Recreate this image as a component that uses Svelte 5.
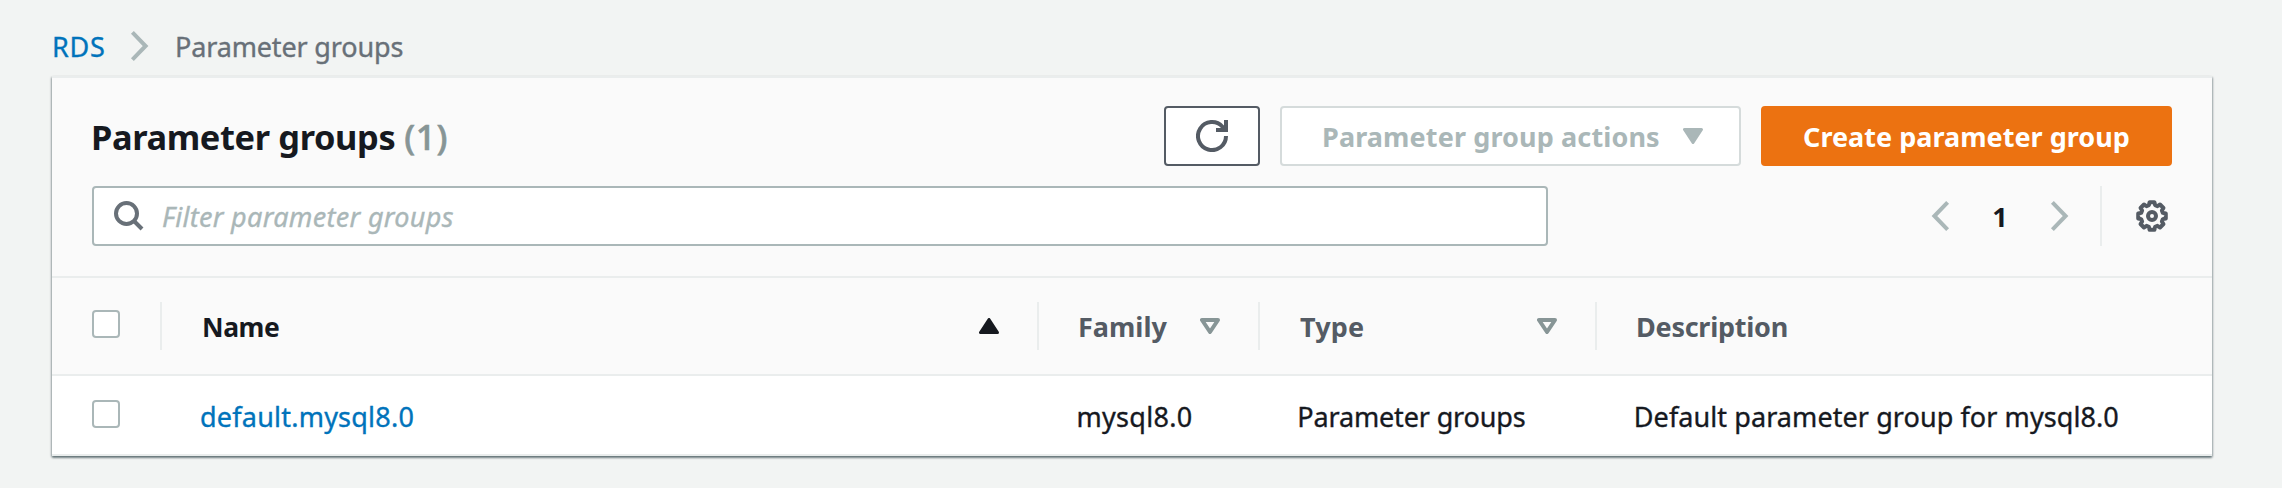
<script>
  const groups = [
    {
      name: 'default.mysql8.0',
      family: 'mysql8.0',
      type: 'Parameter groups',
      description: 'Default parameter group for mysql8.0'
    }
  ];

  // Eight-toothed outline of the settings gear, centred on 16,16.
  const gear = Array.from({ length: 8 }, (_, i) => {
    const point = (r, deg) => {
      const a = ((i * 45 + deg) * Math.PI) / 180;
      return `${(16 + r * Math.sin(a)).toFixed(2)},${(16 - r * Math.cos(a)).toFixed(2)}`;
    };
    return [point(14, -10), point(14, 10), point(11.3, 16), point(11.3, 29)].join(' ');
  }).join(' ');
</script>

{#snippet chevron(dir)}
  <svg class="chevron" class:left={dir === 'left'} viewBox="0 0 20 32" width="20" height="32" aria-hidden="true">
    <path d="M2.4 2.4 15.6 16 2.4 29.6" fill="none" stroke="#aab7b8" stroke-width="4" />
  </svg>
{/snippet}

{#snippet sort()}
  <svg viewBox="0 0 20 16" width="20" height="16" aria-hidden="true">
    <path d="M2 2H18L10 14Z" fill="none" stroke="#879596" stroke-width="4" stroke-linejoin="round" />
  </svg>
{/snippet}

<main>
  <nav>
    <a href="#rds">RDS</a>
    {@render chevron('right')}
    <span class="current">Parameter groups</span>
  </nav>

  <section class="card">
    <header>
      <div class="line">
        <h1>Parameter groups <span>(1)</span></h1>
        <div class="actions">
          <button class="refresh" aria-label="Refresh">
            <svg viewBox="0 0 32 32" width="32" height="32">
              <path d="M30 16A14 14 0 1 1 26.5 6.8L29 10" fill="none" stroke="#545b64" stroke-width="4" />
              <path d="M30 0V10H20" fill="none" stroke="#545b64" stroke-width="4" />
            </svg>
          </button>
          <button class="menu" disabled>
            <span>Parameter group actions</span>
            <svg viewBox="0 0 20 16" width="20" height="16">
              <path d="M1.5 1.5H18.5L10 14.5Z" fill="#aab7b8" stroke="#aab7b8" stroke-width="3" stroke-linejoin="round" />
            </svg>
          </button>
          <button class="create">Create parameter group</button>
        </div>
      </div>

      <div class="line tools">
        <div class="search">
          <svg viewBox="0 0 30 30" width="30" height="30">
            <circle cx="12.5" cy="12.5" r="10.5" fill="none" stroke="#687078" stroke-width="4" />
            <path d="M19.5 19.5 28 28" stroke="#687078" stroke-width="4" />
          </svg>
          <span>Filter parameter groups</span>
        </div>
        <div class="pager">
          {@render chevron('left')}
          <b>1</b>
          {@render chevron('right')}
          <div class="settings">
            <svg viewBox="0 0 32 32" width="32" height="32">
              <polygon points={gear} fill="none" stroke="#545b64" stroke-width="4" stroke-linejoin="round" />
              <circle cx="16" cy="16" r="4" fill="none" stroke="#545b64" stroke-width="4" />
            </svg>
          </div>
        </div>
      </div>
    </header>

    <div class="grid head">
      <div class="cell check"><i class="box"></i></div>
      <div class="cell name">
        <span>Name</span>
        <svg viewBox="0 0 20 16" width="20" height="16">
          <path d="M1.5 14.5H18.5L10 1.5Z" fill="#16191f" stroke="#16191f" stroke-width="3" stroke-linejoin="round" />
        </svg>
      </div>
      <div class="cell"><span>Family</span>{@render sort()}</div>
      <div class="cell type"><span>Type</span>{@render sort()}</div>
      <div class="cell desc"><span>Description</span></div>
    </div>

    {#each groups as g}
      <div class="grid row">
        <div class="cell check"><i class="box"></i></div>
        <div class="cell id"><a href="#group">{g.name}</a></div>
        <div class="cell fam">{g.family}</div>
        <div class="cell kind">{g.type}</div>
        <div class="cell text">{g.description}</div>
      </div>
    {/each}
  </section>
</main>

<style>
  :global(body) {
    background: #f2f4f3;
  }
  main {
    box-sizing: border-box;
    width: 2282px;
    height: 488px;
    padding: 16px 70px 0 52px;
    background: #f2f4f3;
    font: 27px/36px 'Noto Sans', 'Open Sans', sans-serif;
    color: #16191f;
    overflow: hidden;
  }
  svg {
    display: block;
    flex: none;
  }
  a {
    color: #0073bb;
    text-decoration: none;
  }
  nav,
  .row,
  .search {
    -webkit-text-stroke: 0.35px currentColor;
  }
  .chevron.left {
    transform: scaleX(-1);
  }

  nav {
    display: flex;
    align-items: center;
    height: 60px;
  }
  nav a,
  nav .current {
    padding-top: 2px;
  }
  nav a {
    width: 79px;
    letter-spacing: 0.7px;
  }
  nav .current {
    margin-left: 25px;
    color: #687078;
    letter-spacing: -0.15px;
  }
  nav .chevron {
    margin-left: -1px;
  }

  .card {
    box-sizing: border-box;
    width: 2160px;
    height: 380px;
    border-top: 2px solid #eaeded;
    border-bottom: 2px solid #eaeded;
    background: #fff;
    box-shadow:
      0 2px 2px 0 rgba(0, 28, 36, 0.4),
      1px 1px 2px 0 rgba(0, 28, 36, 0.22),
      -1px 1px 2px 0 rgba(0, 28, 36, 0.22);
  }
  header {
    box-sizing: border-box;
    height: 200px;
    padding: 28px 40px 0;
    background: #fafafa;
    border-bottom: 2px solid #eaeded;
  }
  .line {
    display: flex;
    justify-content: space-between;
    align-items: center;
    height: 60px;
  }
  .tools {
    margin-top: 20px;
  }
  h1 {
    display: flex;
    gap: 9px;
    margin: 2px 0 0 -1px;
    font-size: 34.4px;
    line-height: 44px;
    font-weight: 700;
    letter-spacing: -0.38px;
  }
  h1 span {
    font-weight: 500;
    font-size: 35px;
    color: #879596;
    letter-spacing: 0.6px;
    -webkit-text-stroke: 0.6px currentColor;
  }
  .actions {
    display: flex;
    gap: 20px;
  }
  button {
    box-sizing: border-box;
    display: flex;
    align-items: center;
    height: 60px;
    padding: 0;
    border: 2px solid #545b64;
    border-radius: 4px;
    background: #fff;
    font: inherit;
    font-weight: 700;
    justify-content: center;
  }
  .refresh {
    width: 96px;
  }
  .menu {
    width: 461px;
    justify-content: flex-start;
    padding-left: 40px;
    border-color: #d5dbdb;
    color: #aab7b8;
    letter-spacing: 0.12px;
  }
  .menu span {
    padding-top: 2px;
  }
  .menu svg {
    margin-left: 23px;
  }
  .create {
    width: 411px;
    padding-top: 2px;
    border-color: #ec7211;
    background: #ec7211;
    color: #fff;
    letter-spacing: 0.02px;
  }

  .search {
    box-sizing: border-box;
    display: flex;
    align-items: center;
    width: 1456px;
    height: 60px;
    padding-left: 20px;
    border: 2px solid #aab7b8;
    border-radius: 4px;
    background: #fff;
    color: #aab7b8;
    font-style: italic;
    letter-spacing: 0.3px;
  }
  .search span {
    margin-left: 18px;
    padding-top: 2px;
  }
  .pager {
    display: flex;
    align-items: center;
  }
  .pager b {
    width: 100px;
    padding-top: 2px;
    text-align: center;
  }
  .settings {
    display: flex;
    align-items: center;
    height: 60px;
    margin-left: 30px;
    padding: 0 4px 0 34px;
    border-left: 2px solid #eaeded;
  }

  .grid {
    box-sizing: border-box;
    display: grid;
    grid-template-columns: 110px 877px 221px 337px 615px;
    align-items: center;
  }
  .head {
    height: 98px;
    background: #fafafa;
    border-bottom: 2px solid #eaeded;
    font-weight: 700;
    color: #545b64;
  }
  .row {
    height: 78px;
    padding-top: 2px;
  }
  .cell {
    box-sizing: border-box;
    display: flex;
    align-items: center;
    justify-content: space-between;
    height: 48px;
    padding: 0 38px 0 39px;
  }
  .head .cell {
    border-right: 2px solid #eaeded;
  }
  .head .cell:last-child {
    border-right: 0;
  }
  .head span {
    padding-top: 2px;
  }
  .cell.check {
    padding: 0 0 4px 40px;
  }
  .box {
    box-sizing: border-box;
    width: 28px;
    height: 28px;
    border: 2px solid #aab7b8;
    border-radius: 4px;
    background: #fff;
  }
  .cell.name {
    padding-left: 40px;
    color: #16191f;
    font-size: 26.5px;
    letter-spacing: -0.4px;
  }
  .cell.type {
    padding-left: 40px;
    letter-spacing: 0.2px;
  }
  .desc {
    letter-spacing: -0.25px;
  }
  .cell.id,
  .cell.fam,
  .cell.kind,
  .cell.text {
    padding-top: 1px;
    padding-right: 0;
  }
  .cell.id {
    padding-left: 38px;
    letter-spacing: 0.22px;
  }
  .cell.fam {
    padding-left: 37.5px;
    letter-spacing: 0.3px;
  }
  .cell.kind {
    padding-left: 37.3px;
    letter-spacing: -0.15px;
  }
  .cell.text {
    padding-left: 36.8px;
    letter-spacing: 0.08px;
  }
</style>
